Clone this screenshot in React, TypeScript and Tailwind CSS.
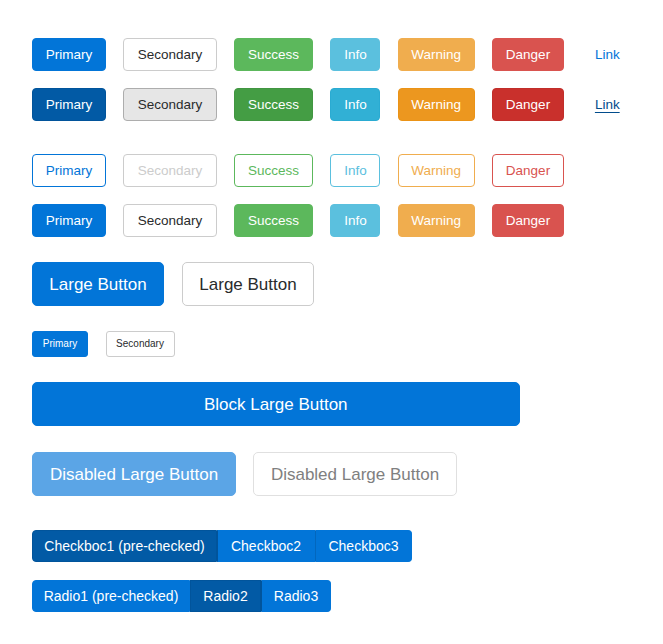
import React from "react";

const font = { fontFamily: '"Liberation Sans", Arial, sans-serif' };

type B = { label: string; w: string; cls: string };

const base =
  "flex items-center justify-center h-[33px] rounded-[4px] border text-[13.5px] leading-none whitespace-nowrap";

const solid: B[] = [
  { label: "Primary", w: "w-[74px]", cls: "bg-[#0275d8] border-[#0275d8] text-white" },
  { label: "Secondary", w: "w-[93.5px]", cls: "bg-white border-[#cccccc] text-[#292b2c]" },
  { label: "Success", w: "w-[79px]", cls: "bg-[#5cb85c] border-[#5cb85c] text-white" },
  { label: "Info", w: "w-[50px]", cls: "bg-[#5bc0de] border-[#5bc0de] text-white" },
  { label: "Warning", w: "w-[77px]", cls: "bg-[#f0ad4e] border-[#f0ad4e] text-white" },
  { label: "Danger", w: "w-[72px]", cls: "bg-[#d9534f] border-[#d9534f] text-white" },
];

const active: B[] = [
  { label: "Primary", w: "w-[74px]", cls: "bg-[#025aa5] border-[#01549b] text-white" },
  { label: "Secondary", w: "w-[93.5px]", cls: "bg-[#e6e6e6] border-[#adadad] text-[#292b2c]" },
  { label: "Success", w: "w-[79px]", cls: "bg-[#449d44] border-[#419641] text-white" },
  { label: "Info", w: "w-[50px]", cls: "bg-[#31b0d5] border-[#2aabd2] text-white" },
  { label: "Warning", w: "w-[77px]", cls: "bg-[#ec971f] border-[#eb9316] text-white" },
  { label: "Danger", w: "w-[72px]", cls: "bg-[#c9302c] border-[#c12e2a] text-white" },
];

const outline: B[] = [
  { label: "Primary", w: "w-[74px]", cls: "bg-white border-[#0275d8] text-[#0275d8]" },
  { label: "Secondary", w: "w-[93.5px]", cls: "bg-white border-[#cccccc] text-[#cccccc]" },
  { label: "Success", w: "w-[79px]", cls: "bg-white border-[#5cb85c] text-[#5cb85c]" },
  { label: "Info", w: "w-[50px]", cls: "bg-white border-[#5bc0de] text-[#5bc0de]" },
  { label: "Warning", w: "w-[77px]", cls: "bg-white border-[#f0ad4e] text-[#f0ad4e]" },
  { label: "Danger", w: "w-[72px]", cls: "bg-white border-[#d9534f] text-[#d9534f]" },
];

function Row({ items, link, className }: { items: B[]; link?: React.ReactNode; className?: string }) {
  return (
    <div className={"flex gap-[17.3px] " + (className || "")}>
      {items.map((b) => (
        <button key={b.label} className={`${base} ${b.w} ${b.cls}`}>
          {b.label}
        </button>
      ))}
      {link}
    </div>
  );
}

export default function App() {
  return (
    <div className="bg-white w-[663px] h-[644px] pl-[32px] pt-[38px]" style={font}>
      <Row
        items={solid}
        link={
          <button className={`${base} w-[52px] border-transparent text-[#0275d8] bg-transparent`}>Link</button>
        }
      />
      <Row
        className="mt-[17px]"
        items={active}
        link={
          <button className={`${base} w-[52px] border-transparent text-[#014c8c] underline underline-offset-[3px] bg-transparent`}>
            Link
          </button>
        }
      />
      <Row className="mt-[33px]" items={outline} />
      <Row className="mt-[17px]" items={solid} />

      <div className="flex gap-[18px] mt-[25px]">
        <button className="flex items-center justify-center w-[132px] h-[44px] rounded-[5px] border border-[#0275d8] bg-[#0275d8] text-white text-[17px] leading-none">
          Large Button
        </button>
        <button className="flex items-center justify-center w-[132px] h-[44px] rounded-[5px] border border-[#cccccc] bg-white text-[#292b2c] text-[17px] leading-none">
          Large Button
        </button>
      </div>

      <div className="flex gap-[17.5px] mt-[25px]">
        <button className="flex items-center justify-center w-[56px] h-[26px] rounded-[3px] border border-[#0275d8] bg-[#0275d8] text-white text-[10px] leading-none">
          Primary
        </button>
        <button className="flex items-center justify-center w-[69px] h-[26px] rounded-[3px] border border-[#cccccc] bg-white text-[#292b2c] text-[10px] leading-none">
          Secondary
        </button>
      </div>

      <button className="flex items-center justify-center w-[487.5px] h-[44px] mt-[25px] rounded-[5px] border border-[#0275d8] bg-[#0275d8] text-white text-[17px] leading-none">
        Block Large Button
      </button>

      <div className="flex gap-[17px] mt-[26px]">
        <button className="flex items-center justify-center w-[204px] h-[44px] rounded-[5px] border border-[#5ba5e6] bg-[#5ba5e6] text-white text-[17px] leading-none">
          Disabled Large Button
        </button>
        <button className="flex items-center justify-center w-[204px] h-[44px] rounded-[5px] border border-[#e0e0e0] bg-white text-[#7f8080] text-[17px] leading-none">
          Disabled Large Button
        </button>
      </div>

      <div className="flex mt-[34px]">
        <button className="flex items-center justify-center w-[185px] h-[32px] rounded-l-[4px] border border-[#01549b] bg-[#025aa5] text-white text-[14px] leading-none">
          Checkboc1 (pre-checked)
        </button>
        <button className="flex items-center justify-center w-[98px] h-[32px] border border-[#0275d8] border-l-[#01549b] bg-[#0275d8] text-white text-[14px] leading-none">
          Checkboc2
        </button>
        <button className="flex items-center justify-center w-[97px] h-[32px] rounded-r-[4px] border border-[#0275d8] border-l-[#0267be] bg-[#0275d8] text-white text-[14px] leading-none">
          Checkboc3
        </button>
      </div>

      <div className="flex mt-[18px]">
        <button className="flex items-center justify-center w-[158px] h-[32px] rounded-l-[4px] border border-[#0275d8] bg-[#0275d8] text-white text-[14px] leading-none">
          Radio1 (pre-checked)
        </button>
        <button className="flex items-center justify-center w-[71px] h-[32px] border border-[#01549b] bg-[#025aa5] text-white text-[14px] leading-none">
          Radio2
        </button>
        <button className="flex items-center justify-center w-[70px] h-[32px] rounded-r-[4px] border border-[#0275d8] border-l-[#01549b] bg-[#0275d8] text-white text-[14px] leading-none">
          Radio3
        </button>
      </div>
    </div>
  );
}
